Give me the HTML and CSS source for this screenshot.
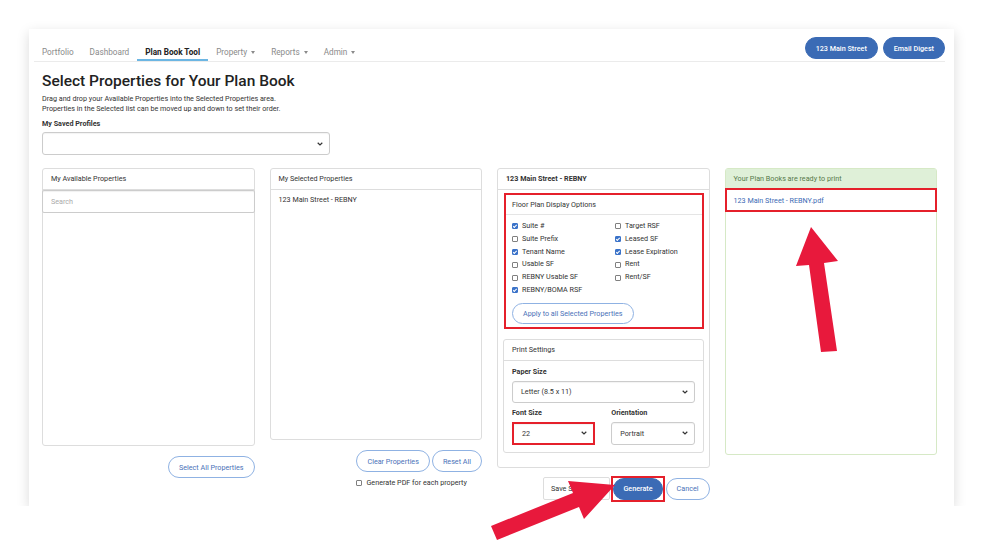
FILE: index.html
```html
<!DOCTYPE html>
<html lang="en">
<head>
    <meta charset="UTF-8">
    <meta name="viewport" content="width=device-width, initial-scale=1.0">
    <title>Plan Book Tool</title>
    <link rel="stylesheet" href="styles.css">
</head>
<body>
    <div class="page">
        <div class="topbar">
            <ul class="tabs">
                <li><a>Portfolio</a></li>
                <li><a>Dashboard</a></li>
                <li class="active"><a>Plan Book Tool</a></li>
                <li><a>Property <span class="caret"></span></a></li>
                <li><a>Reports <span class="caret"></span></a></li>
                <li><a>Admin <span class="caret"></span></a></li>
            </ul>
            <div class="top-actions">
                <button class="btn btn-primary">123 Main Street</button>
                <button class="btn btn-primary">Email Digest</button>
            </div>
        </div>

        <div class="content">
            <h1>Select Properties for Your Plan Book</h1>
            <p class="lead">Drag and drop your Available Properties into the Selected Properties area.<br>Properties in the Selected list can be moved up and down to set their order.</p>

            <label class="field-label">My Saved Profiles</label>
            <div class="select profiles">
                <span></span>
                <svg class="chevron" viewBox="0 0 6 4"><path d="M0.7 0.8 L3 3 L5.3 0.8"/></svg>
            </div>

            <div class="columns">
                <div class="col">
                    <div class="panel available">
                        <div class="panel-head">My Available Properties</div>
                        <input class="search" type="text" placeholder="Search">
                    </div>
                    <div class="col-actions">
                        <button class="btn btn-outline">Select All Properties</button>
                    </div>
                </div>

                <div class="col">
                    <div class="panel selected">
                        <div class="panel-head">My Selected Properties</div>
                        <div class="list">
                            <div class="list-item">123 Main Street - REBNY</div>
                        </div>
                    </div>
                    <div class="col-actions">
                        <div class="stack">
                            <div class="btn-row">
                                <button class="btn btn-outline">Clear Properties</button>
                                <button class="btn btn-outline">Reset All</button>
                            </div>
                            <label class="opt pdf-each"><span class="box"></span>Generate PDF for each property</label>
                        </div>
                    </div>
                </div>

                <div class="col">
                    <div class="panel settings">
                        <div class="panel-head bold">123 Main Street - REBNY</div>
                        <div class="settings-body">
                            <div class="opt-card marked">
                                <div class="opt-head">Floor Plan Display Options</div>
                                <div class="opt-body">
                                    <div class="opt-grid">
                                        <label class="opt"><span class="box on"></span>Suite #</label>
                                        <label class="opt"><span class="box"></span>Target RSF</label>
                                        <label class="opt"><span class="box"></span>Suite Prefix</label>
                                        <label class="opt"><span class="box on"></span>Leased SF</label>
                                        <label class="opt"><span class="box on"></span>Tenant Name</label>
                                        <label class="opt"><span class="box on"></span>Lease Expiration</label>
                                        <label class="opt"><span class="box"></span>Usable SF</label>
                                        <label class="opt"><span class="box"></span>Rent</label>
                                        <label class="opt"><span class="box"></span>REBNY Usable SF</label>
                                        <label class="opt"><span class="box"></span>Rent/SF</label>
                                        <label class="opt"><span class="box on"></span>REBNY/BOMA RSF</label>
                                    </div>
                                    <button class="btn btn-outline apply">Apply to all Selected Properties</button>
                                </div>
                            </div>

                            <div class="print-card">
                                <div class="print-head">Print Settings</div>
                                <div class="print-body">
                                    <label class="field-label">Paper Size</label>
                                    <div class="select">
                                        <span>Letter (8.5 x 11)</span>
                                        <svg class="chevron" viewBox="0 0 6 4"><path d="M0.7 0.8 L3 3 L5.3 0.8"/></svg>
                                    </div>
                                    <div class="print-row">
                                        <div>
                                            <label class="field-label">Font Size</label>
                                            <div class="select marked">
                                                <span>22</span>
                                                <svg class="chevron" viewBox="0 0 6 4"><path d="M0.7 0.8 L3 3 L5.3 0.8"/></svg>
                                            </div>
                                        </div>
                                        <div>
                                            <label class="field-label">Orientation</label>
                                            <div class="select">
                                                <span>Portrait</span>
                                                <svg class="chevron" viewBox="0 0 6 4"><path d="M0.7 0.8 L3 3 L5.3 0.8"/></svg>
                                            </div>
                                        </div>
                                    </div>
                                </div>
                            </div>
                        </div>
                    </div>
                    <div class="col-actions form-actions">
                        <button class="btn btn-plain">Save Settings</button>
                        <span class="mark-box"><button class="btn btn-primary">Generate</button></span>
                        <button class="btn btn-outline">Cancel</button>
                    </div>
                </div>

                <div class="col">
                    <div class="panel ready">
                        <div class="panel-head">Your Plan Books are ready to print</div>
                        <div class="pdf-row marked"><a>123 Main Street - REBNY.pdf</a></div>
                    </div>
                </div>
            </div>
        </div>
    </div>

    <!-- callout arrows drawn over the screenshot -->
    <svg class="arrows" viewBox="0 0 1000 557">
        <polygon points="811,227 838,261 824,263 837,351 821,352 809,265 796,266"/>
        <polygon points="491,526 573,493 568,481 615,485 584,519 579,507 497,540"/>
    </svg>
</body>
</html>
```

FILE: styles.css
```css
* {
    box-sizing: border-box;
}
body {
    margin: 0;
    background-color: #ffffff;
    font-family: Roboto, "Liberation Sans", sans-serif;
    font-size: 7.2px;
    color: #333333;
}
.page {
    width: 925px;
    height: 477px;
    margin: 29px 0 0 29px;
    background-color: #ffffff;
    box-shadow: 0 4px 12px rgba(0,0,0,0.15);
}
.topbar {
    display: flex;
    justify-content: space-between;
    align-items: flex-end;
    margin: 0 9px 0 5px;
    padding-top: 8px;
    border-bottom: 1px solid #ebebeb;
}
.tabs {
    display: flex;
    list-style: none;
    margin: 0;
    padding: 0;
}
.tabs a {
    display: block;
    height: 24px;
    padding: 8px 8px 0;
    line-height: 14px;
    font-size: 8.2px;
    color: #8a8a8a;
    border-bottom: 2px solid transparent;
}
.tabs .active a {
    color: #222222;
    font-weight: 700;
    border-bottom-color: #6cb6e3;
}
.caret {
    display: inline-block;
    width: 0;
    height: 0;
    margin-left: 2px;
    vertical-align: middle;
    border-top: 3px solid #8a8a8a;
    border-left: 2.5px solid transparent;
    border-right: 2.5px solid transparent;
}
.top-actions {
    display: flex;
    gap: 5px;
    margin-bottom: 2px;
}
.btn {
    height: 22px;
    padding: 0 10px;
    border-radius: 11px;
    font-family: inherit;
    font-size: 7.2px;
    cursor: pointer;
    white-space: nowrap;
}
.btn-primary {
    background-color: #3b6bb5;
    border: 1px solid #3b6bb5;
    color: #ffffff;
    font-weight: 500;
}
.btn-outline {
    background-color: #ffffff;
    border: 1px solid #8fb2e3;
    color: #4a72b8;
}
.btn-plain {
    height: 23px;
    border-radius: 2px;
    background-color: #ffffff;
    border: 1px solid #dddddd;
    color: #333333;
    padding: 0 15px 0 7px;
}
.content {
    padding: 0 17px 0 13px;
}
h1 {
    margin: 9px 0 0;
    font-size: 15.5px;
    line-height: 20px;
    font-weight: 500;
    color: #222222;
}
.lead {
    margin: 3px 0 0;
    line-height: 10px;
}
.field-label {
    display: block;
    margin-top: 5px;
    line-height: 10px;
    font-weight: 700;
}
.select {
    display: flex;
    align-items: center;
    justify-content: space-between;
    height: 22px;
    padding: 0 6px 0 8px;
    border: 1px solid #cccccc;
    border-radius: 3px;
    background-color: #ffffff;
    box-shadow: inset 0 1px 1px rgba(0,0,0,0.05);
}
.chevron {
    width: 6px;
    height: 4px;
    fill: none;
    stroke: #333333;
    stroke-width: 1.2;
}
.profiles {
    width: 288px;
    height: 23px;
    margin-top: 3px;
}
.columns {
    display: grid;
    grid-template-columns: repeat(4, 1fr);
    gap: 15px;
    align-items: start;
    margin-top: 13px;
}
.panel {
    border: 1px solid #dddddd;
    border-radius: 3px;
    background-color: #ffffff;
}
.panel-head {
    height: 21px;
    padding: 0 8px;
    line-height: 20px;
    border-bottom: 1px solid #dddddd;
}
.bold {
    font-weight: 700;
}
.available {
    height: 278px;
}
.search {
    display: block;
    width: calc(100% + 2px);
    height: 23px;
    margin: 0 -1px;
    padding: 0 8px;
    border: 1px solid #cccccc;
    border-radius: 2px;
    font-family: inherit;
    font-size: 7.2px;
    box-shadow: inset 0 1px 1px rgba(0,0,0,0.06);
}
.search::placeholder {
    color: #aaaaaa;
}
.selected {
    height: 272px;
}
.list {
    padding: 3px 8px;
}
.list-item {
    line-height: 14px;
}
.col-actions {
    display: flex;
    justify-content: flex-end;
    margin-top: 10px;
}
.stack {
    display: flex;
    flex-direction: column;
    align-items: flex-start;
}
.btn-row {
    display: flex;
    gap: 2px;
}
.pdf-each {
    margin-top: 5px;
    line-height: 10px;
}
.opt {
    display: flex;
    align-items: center;
    gap: 4px;
    line-height: 12.8px;
}
.box {
    position: relative;
    flex: none;
    width: 6px;
    height: 6px;
    border: 1px solid #808080;
    border-radius: 1px;
    background-color: #ffffff;
}
.box.on {
    background-color: #3b73c9;
    border-color: #3b73c9;
}
.box.on::after {
    content: "";
    position: absolute;
    left: 1.2px;
    top: 0;
    width: 1.4px;
    height: 2.8px;
    border: solid #ffffff;
    border-width: 0 1px 1px 0;
    transform: rotate(45deg);
}
.settings-body {
    padding: 3px 5px 14px;
}
.marked {
    border: 2px solid #e5202b;
}
.opt-card {
    margin-left: 1px;
}
.opt-head {
    height: 20px;
    padding: 0 6px;
    line-height: 19px;
    border-bottom: 1px solid #e5e5e5;
}
.opt-body {
    padding: 5px 6px 3px;
}
.opt-grid {
    display: grid;
    grid-template-columns: 103px 1fr;
}
.apply {
    height: 21px;
    margin-top: 6px;
}
.print-card {
    margin-top: 10px;
    border: 1px solid #dddddd;
    border-radius: 3px;
}
.print-head {
    height: 21px;
    padding: 0 8px;
    line-height: 19px;
    border-bottom: 1px solid #dddddd;
}
.print-body {
    padding: 1px 8px 7px;
}
.print-body .select {
    margin-top: 4px;
}
.print-row {
    display: grid;
    grid-template-columns: 1fr 1fr;
    gap: 16px;
}
.print-row .select {
    height: 23px;
}
.print-row .select.marked {
    border-radius: 0;
}
.form-actions {
    align-items: center;
    gap: 1px;
    margin-top: 8px;
}
.mark-box {
    display: inline-flex;
    border: 2px solid #e5202b;
}
.mark-box .btn {
    padding: 0 9px;
}
.ready {
    height: 287px;
    border-color: #d6e9c6;
}
.ready .panel-head {
    height: 19px;
    line-height: 19px;
    background-color: #dff0d8;
    color: #55794a;
    border-bottom: none;
}
.pdf-row {
    height: 24px;
    margin: 0 -1px;
    padding: 0 7px;
    line-height: 21px;
}
.pdf-row a {
    color: #3b6bb5;
}
.arrows {
    position: absolute;
    top: 0;
    left: 0;
    width: 1000px;
    height: 557px;
    fill: #e8193c;
    pointer-events: none;
}
```
